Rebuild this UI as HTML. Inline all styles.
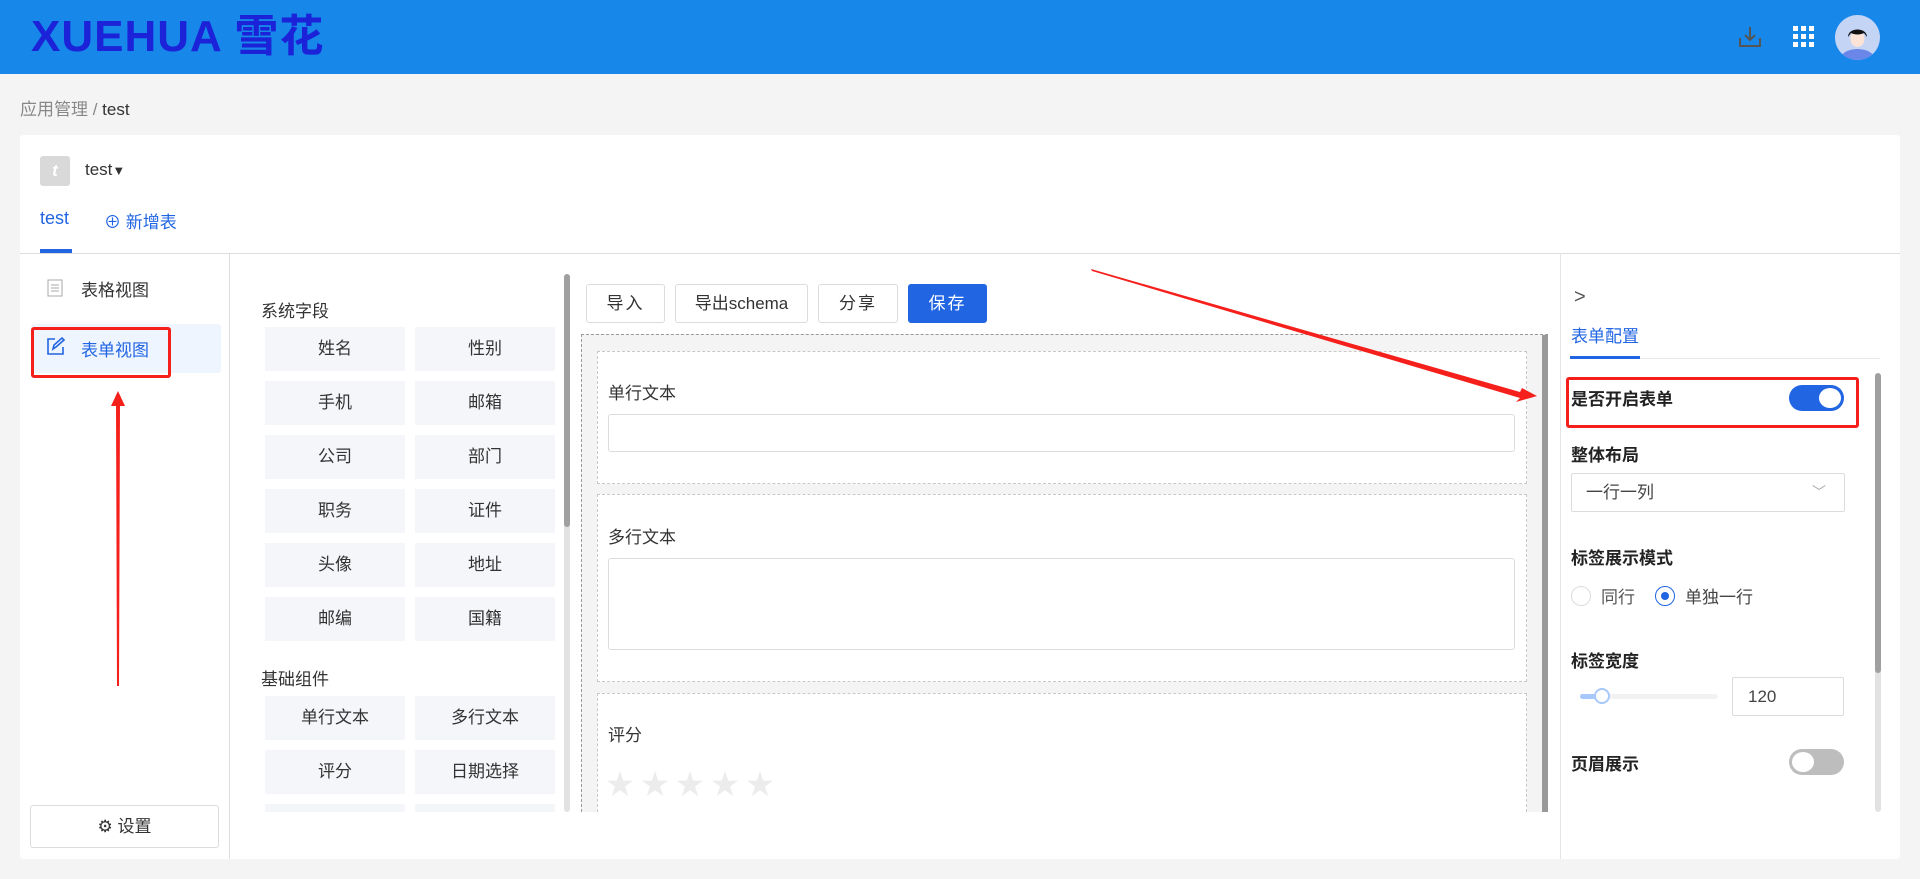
<!DOCTYPE html>
<html><head><meta charset="utf-8"><style>
*{box-sizing:border-box;margin:0;padding:0}
body{width:1920px;height:879px;background:#f4f4f4;font-family:"Liberation Sans","Noto Sans CJK SC",sans-serif;color:#333;position:relative;overflow:hidden}
.a{position:absolute}
.hdr{left:0;top:0;width:1920px;height:74px;background:#1787ea}
.card{left:20px;top:135px;width:1880px;height:724px;background:#fff;border-radius:3px}
.g{position:absolute;width:140px;height:44px;background:#f4f6f9;font-size:17px;text-align:center;line-height:44px;color:#333}
.btn{position:absolute;top:284px;height:39px;border:1px solid #dcdcdc;border-radius:3px;background:#fff;font-size:17px;text-align:center;line-height:37px;letter-spacing:2px}
.lbl{position:absolute;font-size:17px;font-weight:bold;color:#222}
.item{position:absolute;left:597px;width:930px;border:1px dashed #c8c8c8;background:#fff}
</style></head><body>
<div class="a hdr"></div>
<div class="a" style="left:31px;top:12px;font-size:44px;font-weight:bold;color:#1b22d8;letter-spacing:1px;line-height:50px;font-family:'Liberation Sans','Noto Sans CJK SC',sans-serif">XUEHUA 雪花</div>
<svg class="a" style="left:1738px;top:26px" width="24" height="22" viewBox="0 0 24 22"><path d="M12 1v13M7 9l5 5 5-5M2 12v8h20v-8" fill="none" stroke="#555" stroke-width="2"/></svg>
<svg class="a" style="left:1793px;top:26px" width="22" height="22"><g fill="#fff"><rect x="0" y="0" width="5" height="5"/><rect x="8" y="0" width="5" height="5"/><rect x="16" y="0" width="5" height="5"/><rect x="0" y="8" width="5" height="5"/><rect x="8" y="8" width="5" height="5"/><rect x="16" y="8" width="5" height="5"/><rect x="0" y="16" width="5" height="5"/><rect x="8" y="16" width="5" height="5"/><rect x="16" y="16" width="5" height="5"/></g></svg>
<svg class="a" style="left:1835px;top:15px" width="45" height="45"><defs><clipPath id="c"><circle cx="22.5" cy="22.5" r="22.5"/></clipPath></defs><g clip-path="url(#c)"><rect width="45" height="45" fill="#c4d4f4"/><ellipse cx="22.5" cy="44" rx="17" ry="10" fill="#6a86e8"/><ellipse cx="22.5" cy="24" rx="7" ry="8" fill="#fde3d6"/><path d="M13 22c0-10 19-10 19 0l-3-4c-4 2-9 2-13 0z" fill="#111"/></g></svg>

<div class="a" style="left:20px;top:95px;font-size:17px;color:#888">应用管理 / <span style="color:#333">test</span></div>
<div class="a card"></div>
<div class="a" style="left:40px;top:156px;width:30px;height:30px;background:#d9d9d9;border-radius:3px;color:#fff;font-style:italic;font-weight:bold;text-align:center;line-height:30px;font-size:17px">t</div>
<div class="a" style="left:85px;top:160px;font-size:17px">test<span style="font-size:13px">▼</span></div>
<div class="a" style="left:40px;top:208px;font-size:18px;color:#2165e3">test</div>
<div class="a" style="left:40px;top:249px;width:32px;height:4px;background:#2165e3"></div>
<div class="a" style="left:104px;top:208px;font-size:17px;color:#2165e3">⊕ 新增表</div>
<div class="a" style="left:20px;top:253px;width:1880px;height:1px;background:#ddd"></div>
<div class="a" style="left:229px;top:253px;width:1px;height:606px;background:#ddd"></div>

<svg class="a" style="left:47px;top:279px" width="16" height="18"><rect x="1" y="1" width="14" height="16" fill="none" stroke="#aaa"/><g stroke="#aaa"><path d="M4 6h8M4 9h8M4 12h8"/></g></svg>
<div class="a" style="left:81px;top:276px;font-size:17px">表格视图</div>
<div class="a" style="left:31px;top:324px;width:190px;height:49px;background:#eef5fe;border-radius:3px"></div>
<svg class="a" style="left:46px;top:337px" width="19" height="19"><path d="M9 2H2v15h15v-7M7 12l1-4 8-7 2 2-8 7z" fill="none" stroke="#2165e3" stroke-width="1.6"/></svg>
<div class="a" style="left:81px;top:336px;font-size:17px;color:#2165e3">表单视图</div>
<div class="a" style="left:31px;top:327px;width:140px;height:51px;border:3px solid #f5201c;border-radius:3px"></div>
<div class="a" style="left:30px;top:805px;width:189px;height:43px;border:1px solid #dcdcdc;border-radius:3px;text-align:center;line-height:41px;font-size:17px">⚙ 设置</div>

<div class="a" style="left:261px;top:297px;font-size:17px">系统字段</div>
<div class="g" style="left:265px;top:327px">姓名</div><div class="g" style="left:415px;top:327px">性别</div>
<div class="g" style="left:265px;top:381px">手机</div><div class="g" style="left:415px;top:381px">邮箱</div>
<div class="g" style="left:265px;top:435px">公司</div><div class="g" style="left:415px;top:435px">部门</div>
<div class="g" style="left:265px;top:489px">职务</div><div class="g" style="left:415px;top:489px">证件</div>
<div class="g" style="left:265px;top:543px">头像</div><div class="g" style="left:415px;top:543px">地址</div>
<div class="g" style="left:265px;top:597px">邮编</div><div class="g" style="left:415px;top:597px">国籍</div>
<div class="a" style="left:261px;top:665px;font-size:17px">基础组件</div>
<div class="g" style="left:265px;top:696px">单行文本</div><div class="g" style="left:415px;top:696px">多行文本</div>
<div class="g" style="left:265px;top:750px">评分</div><div class="g" style="left:415px;top:750px">日期选择</div>
<div class="g" style="left:265px;top:804px;height:8px"></div><div class="g" style="left:415px;top:804px;height:8px"></div>
<div class="a" style="left:564px;top:274px;width:6px;height:538px;background:#e2e2e2;border-radius:3px"></div>
<div class="a" style="left:564px;top:274px;width:6px;height:253px;background:#a0a0a0;border-radius:3px"></div>

<div class="btn" style="left:586px;width:79px">导入</div>
<div class="btn" style="left:675px;width:133px;letter-spacing:0">导出schema</div>
<div class="btn" style="left:818px;width:80px">分享</div>
<div class="btn" style="left:908px;width:79px;background:#2165e3;border-color:#2165e3;color:#fff">保存</div>
<div class="a" style="left:581px;top:334px;width:967px;height:478px;border:1px dashed #999;background:#f4f4f4;border-bottom:none"></div>
<div class="a" style="left:1542px;top:335px;width:6px;height:477px;background:#999"></div>
<div class="item" style="top:351px;height:133px"></div>
<div class="a" style="left:608px;top:379px;font-size:17px">单行文本</div>
<div class="a" style="left:608px;top:414px;width:907px;height:38px;border:1px solid #dcdcdc;border-radius:3px"></div>
<div class="item" style="top:494px;height:188px"></div>
<div class="a" style="left:608px;top:523px;font-size:17px">多行文本</div>
<div class="a" style="left:608px;top:558px;width:907px;height:92px;border:1px solid #dcdcdc;border-radius:3px"></div>
<div class="item" style="top:693px;height:119px;border-bottom:none"></div>
<div class="a" style="left:608px;top:721px;font-size:17px">评分</div>
<div class="a" style="left:606px;top:763px;font-size:28px;color:#ececec;letter-spacing:7px">★★★★★</div>

<div class="a" style="left:1560px;top:253px;width:1px;height:606px;background:#e4e4e4"></div>
<div class="a" style="left:1574px;top:286px;font-size:20px;color:#555">&gt;</div>
<div class="a" style="left:1571px;top:322px;font-size:17px;color:#2165e3">表单配置</div>
<div class="a" style="left:1570px;top:358px;width:310px;height:1px;background:#e8e8e8"></div>
<div class="a" style="left:1570px;top:356px;width:70px;height:3px;background:#2165e3"></div>
<div class="a" style="left:1875px;top:382px;width:6px;height:430px;background:#e2e2e2;border-radius:3px"></div>
<div class="a" style="left:1875px;top:373px;width:6px;height:300px;background:#a0a0a0;border-radius:3px"></div>
<div class="lbl" style="left:1571px;top:385px">是否开启表单</div>
<div class="a" style="left:1789px;top:385px;width:55px;height:26px;background:#2165e3;border-radius:13px"></div>
<div class="a" style="left:1819px;top:388px;width:22px;height:20px;background:#fff;border-radius:50%"></div>
<div class="a" style="left:1566px;top:377px;width:293px;height:51px;border:3px solid #f5201c;border-radius:3px"></div>
<div class="lbl" style="left:1571px;top:441px">整体布局</div>
<div class="a" style="left:1571px;top:473px;width:274px;height:39px;border:1px solid #dcdcdc;border-radius:2px;font-size:17px;line-height:37px;padding-left:14px;color:#444">一行一列<span style="position:absolute;right:18px;top:0;color:#aaa;font-size:14px">﹀</span></div>
<div class="lbl" style="left:1571px;top:544px">标签展示模式</div>
<div class="a" style="left:1571px;top:586px;width:20px;height:20px;border:1px solid #ddd;border-radius:50%"></div>
<div class="a" style="left:1601px;top:583px;font-size:17px;color:#555">同行</div>
<div class="a" style="left:1655px;top:586px;width:20px;height:20px;border:1px solid #2165e3;border-radius:50%"></div>
<div class="a" style="left:1661px;top:592px;width:8px;height:8px;background:#2165e3;border-radius:50%"></div>
<div class="a" style="left:1685px;top:583px;font-size:17px;color:#444">单独一行</div>
<div class="lbl" style="left:1571px;top:647px">标签宽度</div>
<div class="a" style="left:1580px;top:694px;width:138px;height:5px;background:#f2f2f2;border-radius:3px"></div>
<div class="a" style="left:1580px;top:694px;width:22px;height:5px;background:#a8c8fb;border-radius:3px"></div>
<div class="a" style="left:1594px;top:688px;width:16px;height:16px;border:2px solid #a8c8fb;background:#fff;border-radius:50%"></div>
<div class="a" style="left:1732px;top:677px;width:112px;height:39px;border:1px solid #dcdcdc;border-radius:2px;font-size:17px;line-height:37px;padding-left:15px;color:#444">120</div>
<div class="lbl" style="left:1571px;top:750px">页眉展示</div>
<div class="a" style="left:1789px;top:749px;width:55px;height:26px;background:#bdbdbd;border-radius:13px"></div>
<div class="a" style="left:1792px;top:752px;width:22px;height:20px;background:#fff;border-radius:50%"></div>

<svg class="a" style="left:0;top:0" width="1920" height="879">
<polygon points="1091,269 1092,271 1520,398 1516,402 1537,396 1522,388 1520,392" fill="#f5201c"/>
<polygon points="117,686 119,686 120,406 125,406 118,391 111,406 116,406" fill="#f5201c"/>
</svg>
</body></html>
